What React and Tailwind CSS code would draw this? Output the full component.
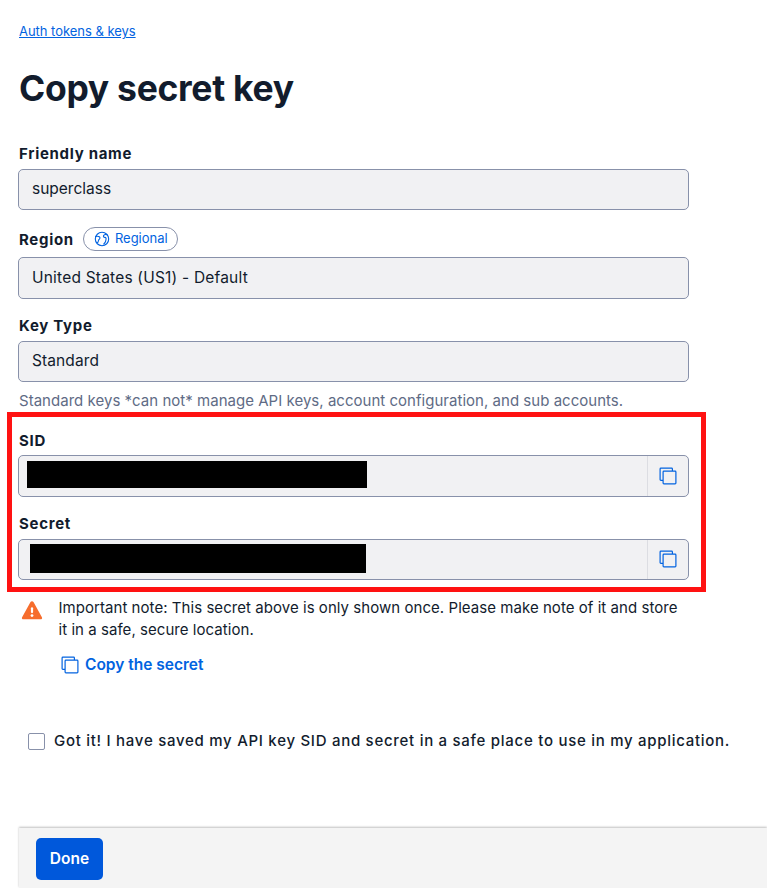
function CopyIcon({ className = "" }) {
  return (
    <svg className={className} width="18" height="18" viewBox="0 0 18 18" fill="none" stroke="currentColor" strokeWidth="1.2" strokeLinejoin="round">
      <path d="M4 13.4H1.9a.8.8 0 0 1-.8-.8V1.9a.8.8 0 0 1 .8-.8h10.7a.8.8 0 0 1 .8.8V4" />
      <rect x="4.1" y="4.1" width="12.8" height="12.8" rx="0.8" />
    </svg>
  );
}

function GlobeIcon() {
  return (
    <svg width="16" height="16" viewBox="0 0 16 16" fill="none" stroke="currentColor" strokeWidth="1.1" strokeLinecap="round" strokeLinejoin="round">
      <circle cx="8" cy="8" r="6.7" />
      <path d="M1.6 5.6c1.400-.5 2.900-.4 3.700.2.9.7.8 1.700 0 2.400-.9.700-.8 1.200-1 2-.1.900-.6 1.400-1.300 1.500" />
      <path d="M13 3.600c-1.500-.3-2.900.1-3.400 1-.5 1 .2 1.700 1.200 1.800 1.200.2 1.500 1 1.200 2-.3 1.200-.2 2-.9 3-.4.6-.9 1.200-1.300 1.500" />
    </svg>
  );
}

function WarningIcon() {
  return (
    <svg width="22" height="19" viewBox="0 0 22 19">
      <path d="M9.500 1.100a1.800 1.800 0 0 1 3 0l8.400 15.100c.6 1-.1 2.100-1.200 2.100H2.300c-1.100 0-1.800-1.100-1.200-2.100z" fill="#f66d2d" />
      <path d="M11 7.300v3.800" stroke="#fff" strokeWidth="2.200" strokeLinecap="round" />
      <circle cx="11" cy="14.600" r="1.400" fill="#fff" />
    </svg>
  );
}

const label = "text-[15px] leading-[22px] -mb-0.5 font-bold tracking-[0.7px] text-[#121c2d]";
const field = "flex w-[671px] rounded-[5px] border border-[#8891aa] bg-[#f1f1f3]";
const value = "items-center pb-px pl-[13px] text-[15.5px]";

export default function App() {
  return (
    <div className="flex h-[888px] w-[767px] flex-col overflow-hidden bg-white font-['Inter',sans-serif] text-[15px] text-[#121c2d]">
      <div className="flex shrink-0 flex-col items-start pl-[18px]">
        <a className="mt-[21px] ml-px text-[13px] leading-5 tracking-[-0.03px] text-[#0263e0] underline">Auth tokens &amp; keys</a>
        <h1 className="mt-[26px] ml-px h-11 text-[35.5px] leading-[44px] font-bold tracking-[-0.3px]">Copy secret key</h1>

        <div className={`mt-8 ml-px ${label}`}>Friendly name</div>
        <div className={`mt-[6px] h-[41px] ${value} ${field}`}>superclass</div>

        <div className="mt-[17px] ml-px flex h-6 items-center gap-[9px]">
          <span className={label}>Region</span>
          <span className="flex h-6 w-[95px] items-center gap-[5px] rounded-full border border-[#8891aa] pl-[10px] text-[13px] text-[#0263e0]">
            <GlobeIcon />
            Regional
          </span>
        </div>
        <div className={`mt-[6px] h-[42px] tracking-[0.2px] ${value} ${field}`}>United States (US1) - Default</div>

        <div className={`mt-4 ml-px ${label}`}>Key Type</div>
        <div className={`mt-[6px] h-[41px] tracking-[0.1px] ${value} ${field}`}>Standard</div>
        <p className="mt-2 ml-px leading-[22px] tracking-[0.025px] whitespace-nowrap text-[#606b85]">
          Standard keys *can not* manage API keys, account configuration, and sub accounts.
        </p>
      </div>

      <div className="ml-[7px] h-[180px] w-[699px] shrink-0 border-[5px] border-[#ff1212] pt-[13px] pl-[6px]">
        <div className={`ml-px ${label}`}>SID</div>
        <div className={`mt-[5px] h-[42px] justify-between ${field}`}>
          <div className="mt-[5px] ml-2 h-[27px] w-[340px] bg-black" />
          <div className="flex w-[41px] items-center justify-center border-l border-[#dcdde2] text-[#0263e0]">
            <CopyIcon />
          </div>
        </div>
        <div className={`mt-4 ml-px ${label}`}>Secret</div>
        <div className={`mt-[6px] h-[41px] justify-between ${field}`}>
          <div className="mt-1 ml-[11px] h-[29px] w-[336px] bg-black" />
          <div className="flex w-[41px] items-center justify-center border-l border-[#dcdde2] pb-px text-[#0263e0]">
            <CopyIcon />
          </div>
        </div>
      </div>

      <div className="mt-[5px] ml-[21px] flex shrink-0">
        <div className="mt-1 w-[37.5px]">
          <WarningIcon />
        </div>
        <p className="leading-[22px] tracking-[0.05px] whitespace-nowrap">
          Important note: This secret above is only shown once. Please make note of it and store
          <br />
          it in a safe, secure location.
        </p>
      </div>
      <button className="mt-[13px] ml-[61px] flex h-[22px] shrink-0 items-center gap-[6px] self-start text-[15.5px] font-semibold text-[#0263e0]">
        <CopyIcon />
        Copy the secret
      </button>

      <label className="mt-[54px] ml-[28px] flex h-[22px] shrink-0 items-center gap-[9px] font-medium tracking-[0.72px] whitespace-nowrap">
        <span className="mt-px h-[17px] w-[17px] shrink-0 rounded-[2px] border border-[#8891aa] bg-white" />
        Got it! I have saved my API key SID and secret in a safe place to use in my application.
      </label>

      <footer className="mt-[76px] ml-[19px] h-[60px] shrink-0 bg-[#f4f4f4] pt-[10px] pl-[17px] shadow-[0_-1px_2px_0px_rgba(0,0,0,0.25)]">
        <button className="flex h-[42px] w-[67px] items-center justify-center rounded-[5px] bg-[#0058db] text-[15.5px] font-semibold text-white">Done</button>
      </footer>
    </div>
  );
}
